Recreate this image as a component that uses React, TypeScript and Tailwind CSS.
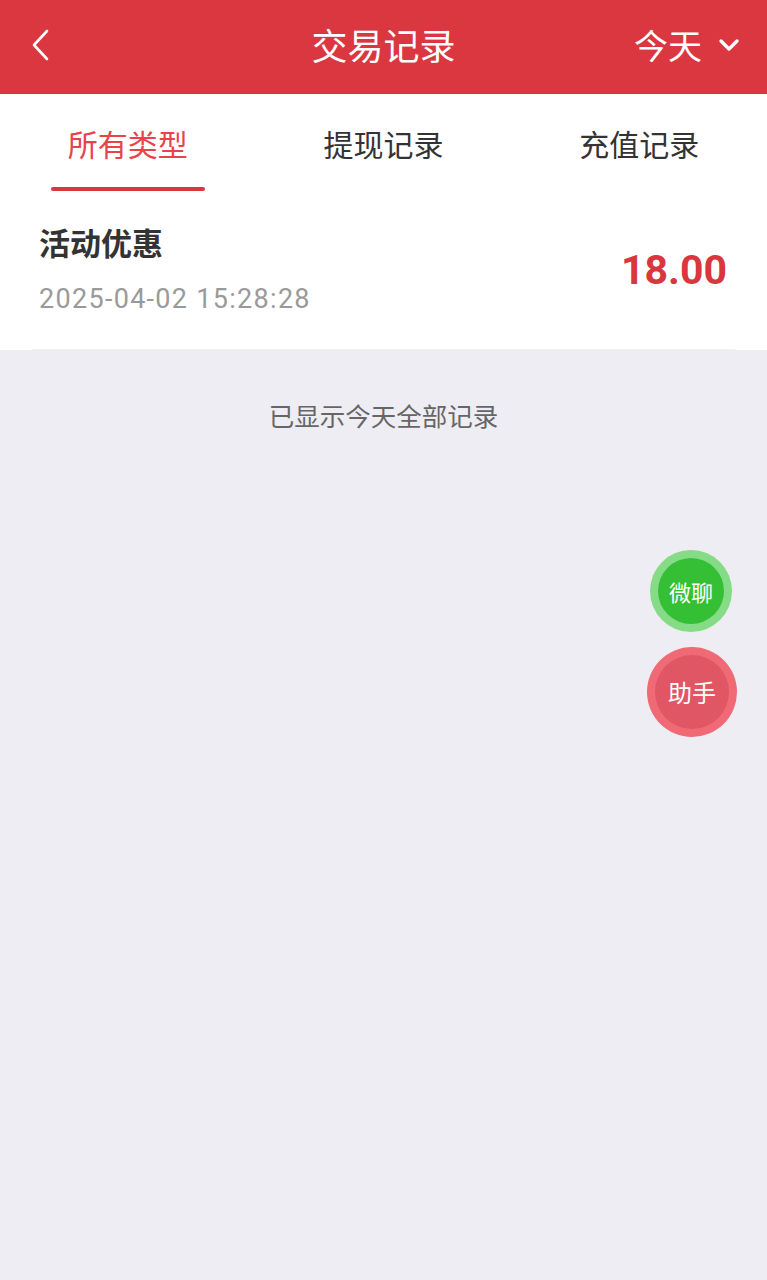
import React from "react";

const font = { fontFamily: '"Noto Sans CJK SC", "Noto Sans", sans-serif' };

export default function App() {
  return (
    <div className="relative min-h-[1280px] w-full bg-[#eeedf3]" style={font}>
      {/* Header */}
      <div className="relative flex h-[94px] items-center bg-[#da3740] pl-[32px] pr-[27px] text-white">
        <svg width="18" height="32" viewBox="0 0 18 32" className="shrink-0 -mt-[4px]">
          <path d="M15 2 L2 16 L15 30" fill="none" stroke="white" strokeWidth="2.6" strokeLinecap="round" strokeLinejoin="round" />
        </svg>
        <div className="absolute left-1/2 top-[26px] -translate-x-1/2 text-[36px] leading-none">交易记录</div>
        <div className="ml-auto -mt-[4px] flex items-center gap-[16px]">
          <span className="text-[34px] leading-none">今天</span>
          <svg width="22" height="16" viewBox="0 0 22 16">
            <path d="M3 4 L11 12 L19 4" fill="none" stroke="white" strokeWidth="3.4" strokeLinecap="round" strokeLinejoin="round" />
          </svg>
        </div>
      </div>

      {/* Tabs */}
      <div className="grid h-[98px] grid-cols-3 bg-white">
        <div className="relative flex items-center justify-center">
          <span className="text-[30px] leading-none text-[#e8434a]">所有类型</span>
          <div className="absolute bottom-[1px] left-1/2 h-[4px] w-[154px] -translate-x-1/2 rounded-full bg-[#da3740]" />
        </div>
        <div className="flex items-center justify-center">
          <span className="text-[30px] leading-none text-[#333333]">提现记录</span>
        </div>
        <div className="flex items-center justify-center">
          <span className="text-[30px] leading-none text-[#333333]">充值记录</span>
        </div>
      </div>

      {/* Item */}
      <div className="bg-white px-[32px]">
        <div className="flex h-[158px] items-start border-b border-[#f1f1f3] pl-[7px] pr-[8px]">
          <div className="flex flex-col pt-[34px]">
            <span className="text-[31px] font-bold leading-none text-[#333333]">活动优惠</span>
            <span className="mt-[29px] text-[27px] leading-none tracking-[1.3px] text-[#9a9a9a]" style={{ fontFamily: '"Roboto", "Noto Sans", sans-serif' }}>2025-04-02 15:28:28</span>
          </div>
          <span className="ml-auto self-center text-[41px] font-bold leading-none text-[#d9363e]" style={{ fontFamily: '"Roboto", "Noto Sans", sans-serif' }}>18.00</span>
        </div>
      </div>

      {/* Footer text */}
      <div className="flex justify-center pt-[52px]">
        <span className="text-[25.5px] leading-none text-[#666666]">已显示今天全部记录</span>
      </div>

      {/* Floating buttons */}
      <div className="absolute left-[650px] top-[550px] flex h-[82px] w-[82px] items-center justify-center rounded-full bg-[#85db86]">
        <div className="flex h-[66px] w-[66px] items-center justify-center rounded-full bg-[#35bf35] text-[22px] text-white">微聊</div>
      </div>
      <div className="absolute left-[647px] top-[647px] flex h-[90px] w-[90px] items-center justify-center rounded-full bg-[#f06a76]">
        <div className="flex h-[74px] w-[74px] items-center justify-center rounded-full bg-[#e05664] text-[24px] text-white">助手</div>
      </div>
    </div>
  );
}
